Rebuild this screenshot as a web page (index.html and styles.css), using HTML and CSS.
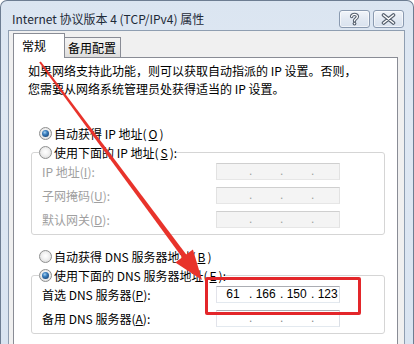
FILE: index.html
```html
<!DOCTYPE html>
<html lang="zh-CN">
<head>
  <meta charset="UTF-8">
  <title>Internet 协议版本 4 (TCP/IPv4) 属性</title>
  <link rel="stylesheet" href="styles.css">
</head>
<body>
  <div class="window">
    <div class="titlebar">
      <span class="title">Internet 协议版本 4 (TCP/IPv4) 属性</span>
      <div class="caption-buttons">
        <button class="cap-btn" title="帮助">
          <svg width="13" height="14" viewBox="0 0 13 14">
            <path d="M3.6 4.6 C3.6 1.6 9.4 1.6 9.4 4.6 C9.4 6.8 6.5 6.6 6.5 8.8" fill="none" stroke="#56606e" stroke-width="3.4" stroke-linecap="round"/>
            <circle cx="6.5" cy="11.6" r="1.9" fill="#56606e"/>
            <path d="M3.6 4.6 C3.6 1.6 9.4 1.6 9.4 4.6 C9.4 6.8 6.5 6.6 6.5 8.8" fill="none" stroke="#fff" stroke-width="1.3" stroke-linecap="round"/>
            <circle cx="6.5" cy="11.6" r="0.8" fill="#fff"/>
          </svg>
        </button>
        <button class="cap-btn" title="关闭">
          <svg width="15" height="12" viewBox="0 0 15 12">
            <path d="M2.5 2 L12.5 10 M12.5 2 L2.5 10" stroke="#56606e" stroke-width="3.6" stroke-linecap="round"/>
            <path d="M2.5 2 L12.5 10 M12.5 2 L2.5 10" stroke="#fff" stroke-width="1.4" stroke-linecap="round"/>
          </svg>
        </button>
      </div>
    </div>

    <div class="client">
      <div class="tabs">
        <div class="tab active">常规</div>
        <div class="tab">备用配置</div>
      </div>

      <div class="panel">
        <p class="intro">如果网络支持此功能，则可以获取自动指派的 IP 设置。否则，</p>
        <p class="intro">您需要从网络系统管理员处获得适当的 IP 设置。</p>

        <label class="radio-row first"><span class="radio checked"></span>自动获得 IP 地址(<u>O</u>)</label>

        <fieldset class="group">
          <legend><label class="radio-row"><span class="radio"></span>使用下面的 IP 地址(<u>S</u>):</label></legend>
          <div class="group-body">
            <div class="field disabled">
              <span>IP 地址(<u>I</u>):</span>
              <div class="ip-box"><span class="oct"></span><span class="oct">.</span><span class="oct">.</span><span class="oct">.</span></div>
            </div>
            <div class="field disabled">
              <span>子网掩码(<u>U</u>):</span>
              <div class="ip-box"><span class="oct"></span><span class="oct">.</span><span class="oct">.</span><span class="oct">.</span></div>
            </div>
            <div class="field disabled">
              <span>默认网关(<u>D</u>):</span>
              <div class="ip-box"><span class="oct"></span><span class="oct">.</span><span class="oct">.</span><span class="oct">.</span></div>
            </div>
          </div>
        </fieldset>

        <label class="radio-row second"><span class="radio"></span>自动获得 DNS 服务器地址(<u>B</u>)</label>

        <fieldset class="group">
          <legend><label class="radio-row"><span class="radio checked"></span>使用下面的 DNS 服务器地址(<u>E</u>):</label></legend>
          <div class="group-body">
            <div class="field">
              <span>首选 DNS 服务器(<u>P</u>):</span>
              <div class="ip-box"><span class="oct">61</span><span class="oct">. 166</span><span class="oct">. 150</span><span class="oct">. 123</span></div>
            </div>
            <div class="field">
              <span>备用 DNS 服务器(<u>A</u>):</span>
              <div class="ip-box empty"><span class="oct"></span><span class="oct">.</span><span class="oct">.</span><span class="oct">.</span></div>
            </div>
          </div>
        </fieldset>
      </div>
    </div>

    <!-- red annotation drawn over the dialog -->
    <div class="mark-box"></div>
    <svg class="mark-arrow" width="414" height="344" viewBox="0 0 414 344">
      <polygon points="40.8,61.4 187,255.5 183,258.5 39.2,62.6" fill="#e8332b"/>
      <polygon points="202,280 175.3,262.4 192.9,249.4" fill="#e8332b"/>
    </svg>
  </div>
</body>
</html>
```

FILE: styles.css
```css
* {
  box-sizing: border-box;
  margin: 0;
  padding: 0;
}

body {
  width: 414px;
  height: 344px;
  overflow: hidden;
  background: #fff;
  font-family: "Noto Sans CJK SC", "Noto Sans", sans-serif;
  font-size: 12px;
  color: #000;
}

.window {
  position: relative;
  width: 414px;
  height: 344px;
  display: flex;
  flex-direction: column;
  padding: 0 8px 0 7px;
  background: linear-gradient(to bottom, #dbe5f1, #dfe8f3 30%, #d9e4f1);
  border: 1px solid #6d7d92;
  border-bottom: none;
  border-radius: 7px 7px 0 0;
}

/* title bar */
.titlebar {
  height: 29px;
  display: flex;
  justify-content: space-between;
  align-items: flex-start;
  padding-left: 4px;
}

.title {
  margin-top: 10px;
  line-height: 16px;
  color: #1e2a38;
}

.caption-buttons {
  display: flex;
  gap: 3px;
  margin-top: 9px;
  margin-right: 1px;
}

.cap-btn {
  width: 31px;
  height: 18px;
  display: flex;
  align-items: center;
  justify-content: center;
  border: 1px solid #8a9ab0;
  border-radius: 3px;
  background: linear-gradient(to bottom, #f1f5fa, #e2e9f2 50%, #d9e2ee);
  box-shadow: inset 0 0 0 1px rgba(255,255,255,0.6);
}

/* client area */
.client {
  flex: 1;
  display: flex;
  flex-direction: column;
  background: #f0f0f0;
  border: 1px solid #8f9eb1;
  border-bottom: none;
  padding: 2px 6px 0 4px;
}

.tabs {
  display: flex;
  align-items: flex-end;
}

.tab {
  width: 57px;
  height: 20px;
  margin-left: -1px;
  padding: 0 3px;
  line-height: 19px;
  white-space: nowrap;
  border: 1px solid #898c95;
  border-bottom: none;
  background: linear-gradient(to bottom, #f3f3f3, #ebebeb 50%, #dddddd);
}

.tab.active {
  position: relative;
  z-index: 1;
  width: 52px;
  height: 25px;
  margin-left: 0;
  margin-bottom: -1px;
  padding: 2px 8px 0;
  line-height: 20px;
  background: #fff;
}

.panel {
  flex: 1;
  background: #fff;
  border: 1px solid #898c95;
  border-bottom: none;
  padding: 4px 0 0 14px;
}

.intro {
  height: 17.5px;
  line-height: 17.5px;
  white-space: nowrap;
}

/* radio buttons */
.radio-row {
  display: flex;
  align-items: center;
  gap: 2px;
  height: 16px;
  white-space: nowrap;
  background: #fff;
}

.radio-row.first {
  margin: 28px 0 0 11px;
}

.radio-row.second {
  margin: 13px 0 0 11px;
}

.radio {
  width: 13px;
  height: 13px;
  border-radius: 50%;
  border: 1px solid #8e8f8f;
  background: radial-gradient(circle at 50% 45%, #ffffff 0, #f2f2f2 40%, #d4d4d4 100%);
  display: flex;
  align-items: center;
  justify-content: center;
}

.radio.checked::after {
  content: "";
  width: 7px;
  height: 7px;
  border-radius: 50%;
  background: radial-gradient(circle at 40% 35%, #a8d2f0 0, #3a7fbf 35%, #0d2f5a 100%);
}

/* group boxes */
.group {
  margin: 3px 12px 0 3px;
  padding: 3px 7px 6px 7px;
  border: 1px solid #d5d5d5;
  border-radius: 3px;
}

.group legend {
  padding: 0;
}

.group-body {
  display: flex;
  flex-direction: column;
  gap: 7px;
}

.field {
  display: grid;
  grid-template-columns: 174px 124px;
  align-items: center;
  height: 17px;
  margin-left: 3px;
}

.field.disabled span {
  color: #a0a0a0;
}

.ip-box {
  height: 17px;
  display: flex;
  border: 1px solid;
  border-color: #abadb3 #dbdfe6 #e3e9ef #e2e3ea;
  background: #fff;
  font-family: "Liberation Sans", sans-serif;
  font-size: 12px;
  line-height: 15px;
}

.oct {
  width: 31px;
  white-space: pre;
}

.oct:first-child {
  width: 32px;
  text-align: center;
}

.oct:last-child {
  width: 28px;
}

.field.disabled .ip-box {
  background: #f4f4f4;
  border-color: #cfcfcf #e2e2e2 #e6e6e6 #e2e2e2;
  color: #9a9a9a;
}

.ip-box.empty {
  color: #8a8a8a;
}

/* red annotation */
.mark-box {
  position: absolute;
  left: 204px;
  top: 276px;
  width: 156px;
  height: 38px;
  border: 3px solid #e3262a;
  border-radius: 2px;
}

.mark-arrow {
  position: absolute;
  left: -1px;
  top: -1px;
}
```
